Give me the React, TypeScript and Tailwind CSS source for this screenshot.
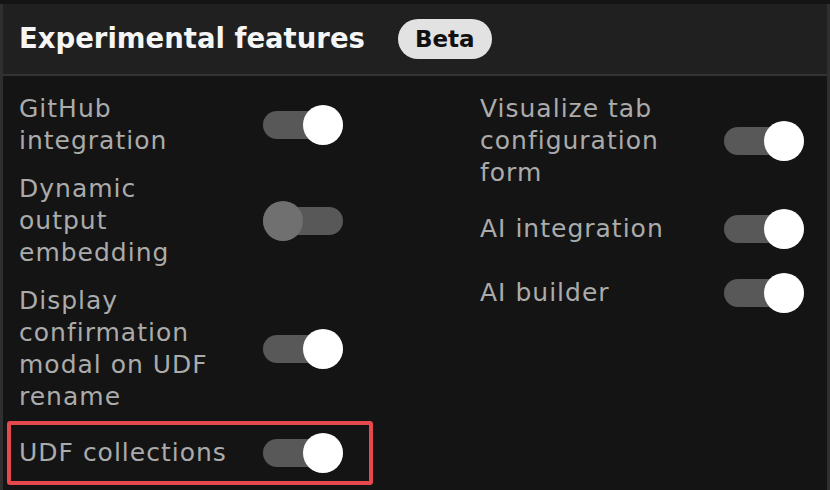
import React, { useState } from 'react';

type Feature = {
  id: string;
  label: string;
  enabled: boolean;
  highlighted?: boolean;
};

const LEFT_FEATURES: Feature[] = [
  { id: 'github', label: 'GitHub integration', enabled: true },
  { id: 'dynamic-output', label: 'Dynamic output embedding', enabled: false },
  { id: 'udf-rename', label: 'Display confirmation modal on UDF rename', enabled: true },
  { id: 'udf-collections', label: 'UDF collections', enabled: true, highlighted: true },
];

const RIGHT_FEATURES: Feature[] = [
  { id: 'visualize-tab', label: 'Visualize tab configuration form', enabled: true },
  { id: 'ai-integration', label: 'AI integration', enabled: true },
  { id: 'ai-builder', label: 'AI builder', enabled: true },
];

const Toggle: React.FC<{ checked: boolean; onChange: () => void }> = ({ checked, onChange }) => (
  <button
    type="button"
    role="switch"
    aria-checked={checked}
    onClick={onChange}
    className="relative flex h-12 w-20 shrink-0 items-center"
  >
    <span className="h-7 w-20 rounded-full bg-[#585858]" />
    <span
      className={`absolute top-1 h-10 w-10 rounded-full ${checked ? 'left-10 bg-white' : 'left-0 bg-[#707070]'}`}
    />
  </button>
);

const FeatureRow: React.FC<{ feature: Feature; onToggle: () => void }> = ({ feature, onToggle }) => (
  <div
    className={`flex items-center justify-between py-2 pl-3 pr-[30px] ${
      feature.highlighted ? 'rounded-[3px] outline-4 -outline-offset-4 outline-[#e5484d]' : ''
    }`}
  >
    <span className="w-[211px] text-[25px] leading-8 tracking-[1px] text-[#ababab]">{feature.label}</span>
    <Toggle checked={feature.enabled} onChange={onToggle} />
  </div>
);

export default function App() {
  const [left, setLeft] = useState(LEFT_FEATURES);
  const [right, setRight] = useState(RIGHT_FEATURES);

  const flip = (list: Feature[], id: string) =>
    list.map((f) => (f.id === id ? { ...f, enabled: !f.enabled } : f));

  return (
    <div
      className="h-[490px] w-[830px] overflow-hidden bg-[#141414] pt-1"
      style={{ fontFamily: '"DejaVu Sans", "Noto Sans", sans-serif' }}
    >
      <div className="h-full border-x-[3px] border-[#2f2f2f]">
        <div className="flex h-[72px] items-center gap-[33px] border-b-2 border-[#333333] bg-[#202020] pl-4">
          <h1 className="text-[27.5px] font-bold text-[#f5f5f5]">Experimental features</h1>
          <span className="flex h-10 items-center rounded-full bg-[#e2e2e2] px-[17px] text-[23px] font-bold text-[#111111]">
            Beta
          </span>
        </div>

        <div className="grid grid-cols-[366px_366px] gap-x-[95px] pl-1 pt-[9px]">
          <div className="flex flex-col">
            {left.map((f) => (
              <FeatureRow key={f.id} feature={f} onToggle={() => setLeft(flip(left, f.id))} />
            ))}
          </div>
          <div className="flex flex-col">
            {right.map((f) => (
              <FeatureRow key={f.id} feature={f} onToggle={() => setRight(flip(right, f.id))} />
            ))}
          </div>
        </div>
      </div>
    </div>
  );
}
